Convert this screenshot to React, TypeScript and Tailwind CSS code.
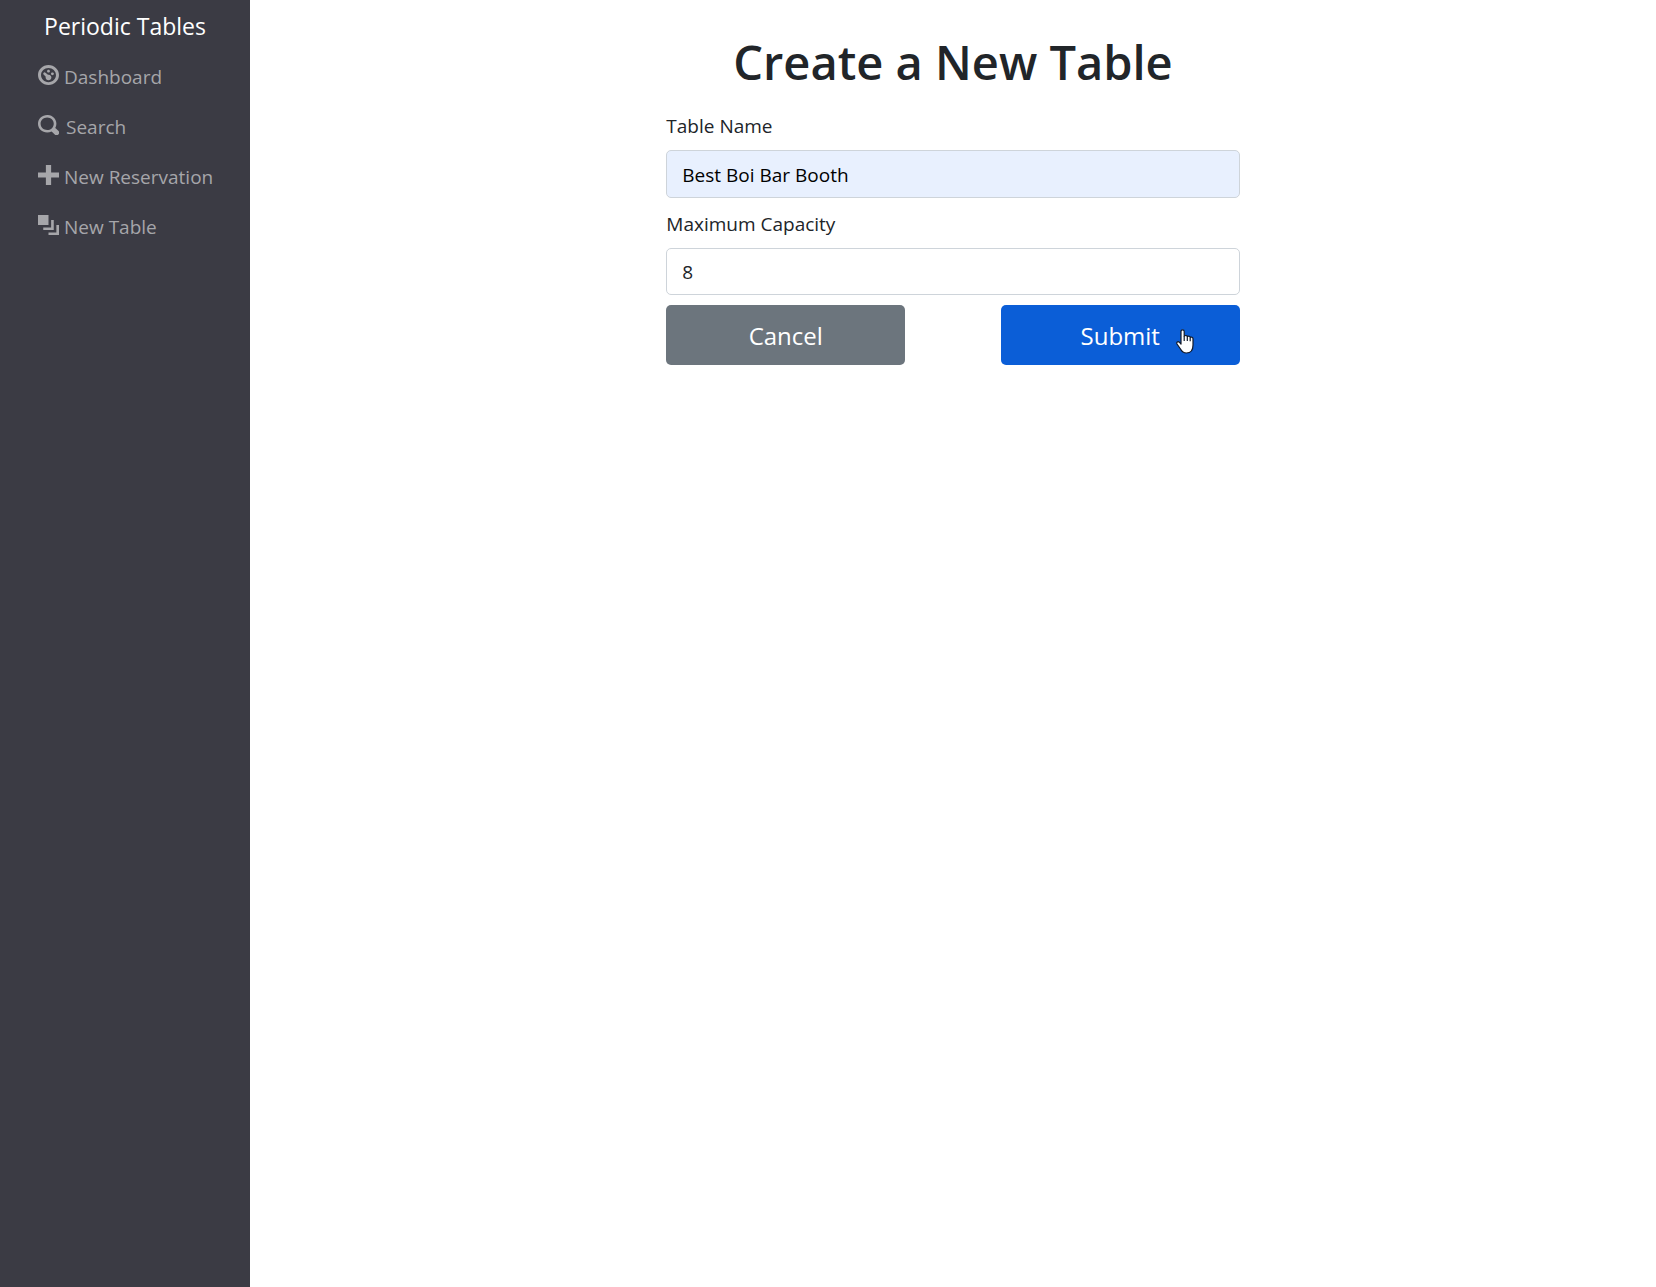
const navItems = [
  {
    label: "Dashboard",
    gap: "gap-[5px]",
    path: "M4 0c-2.2 0-4 1.8-4 4s1.8 4 4 4 4-1.8 4-4-1.8-4-4-4zm0 1.150c1.570 0 2.850 1.280 2.850 2.850s-1.280 2.850-2.850 2.850-2.850-1.280-2.850-2.850 1.280-2.850 2.850-2.850zm0 .75c-.3 0-.55.25-.55.55s.25.55.55.55.55-.25.55-.55-.25-.55-.55-.55zm-1.66 1.100a.5.5 0 0 0-.19.84l.8.86c-.02.08-.05.2-.05.3 0 .6.5 1.100 1.100 1.100s1.100-.5 1.100-1.100-.4-1.100-1-1.150c-.1 0-.2.04-.3.06l-.96-.81a.5.5 0 0 0-.44-.16.5.5 0 0 0-.06 0zm3.160 0c-.3 0-.55.22-.55.5s.25.55.55.55.55-.25.55-.55-.25-.5-.55-.5z",
  },
  {
    label: "Search",
    gap: "gap-[7px]",
    path: "M3.5 0c-1.93 0-3.5 1.57-3.5 3.5s1.57 3.5 3.5 3.5c.59 0 1.17-.14 1.66-.41a1 1 0 0 0 .13.13l1 1a1.02 1.02 0 1 0 1.44-1.44l-1-1a1 1 0 0 0-.16-.13c.27-.49.44-1.06.44-1.66 0-1.93-1.55-3.5-3.5-3.5zm0 1c1.39 0 2.5 1.11 2.5 2.5 0 .66-.24 1.27-.66 1.72l-.03.03a1 1 0 0 0-.13.13c-.44.4-1.04.63-1.69.63-1.39 0-2.5-1.11-2.5-2.5s1.11-2.5 2.5-2.5z",
  },
  {
    label: "New Reservation",
    gap: "gap-[5px]",
    path: "M3 0v3h-3v2h3v3h2v-3h3v-2h-3v-3h-2z",
  },
  {
    label: "New Table",
    gap: "gap-[5px]",
    path: "M0 0v4h4v-4h-4zm5 2v3h-3v1h4v-4h-1zm2 2v3h-3v1h4v-4h-1z",
  },
];

function Sidebar() {
  return (
    <nav className="w-[250px] shrink-0 bg-[#3b3b44]">
      <a href="#" className="flex h-[52px] items-center justify-center text-[23px] text-white">
        Periodic Tables
      </a>
      <ul className="pl-[38px]">
        {navItems.map((item) => (
          <li key={item.label}>
            <a href="#" className={`flex h-[50px] items-center text-[19px] text-[#a6a6aa] ${item.gap}`}>
              <svg
                viewBox="0 0 8 8"
                preserveAspectRatio="none"
                className="mb-1 h-5 w-[21px] fill-current"
                aria-hidden="true"
              >
                <path d={item.path} />
              </svg>
              {item.label}
            </a>
          </li>
        ))}
      </ul>
    </nav>
  );
}

function HandCursor() {
  return (
    <svg
      viewBox="0 0 18 25"
      className="pointer-events-none absolute top-6 right-[46px] h-[25px] w-[18px]"
      aria-hidden="true"
    >
      <path
        d="M5 15V2.500C5 .2 8.200.2 8.200 2.500V7C9.500 6.100 11.200 6.500 11.500 7.500C12.500 6.800 14 7.200 14.300 8.300C15.300 7.700 17 8.200 17 9.800V16C17 21 14.500 24 10.500 24C7 24 5.500 22 4.500 20L1 15C.2 13.200 1.800 12 3.300 13.200Z"
        fill="white"
        stroke="#111827"
        strokeWidth="1.2"
        strokeLinejoin="round"
      />
      <path d="M8.200 7v5M11.300 7.500v4.500M14.200 8.300v4" stroke="#111827" strokeWidth="1.200" fill="none" />
    </svg>
  );
}

export default function App() {
  return (
    <div className="flex min-h-screen bg-white font-['Open_Sans','Noto_Sans',sans-serif] text-[#212529]">
      <Sidebar />
      <main className="flex-1 px-[15px] pt-8">
        <form className="mx-auto w-5/12" onSubmit={(e) => e.preventDefault()}>
          <h1 className="text-center text-[47px] leading-[60px] font-semibold whitespace-nowrap">Create a New Table</h1>
          <label htmlFor="table-name" className="mt-[19px] block text-[19px] leading-[30px]">
            Table Name
          </label>
          <input
            id="table-name"
            type="text"
            defaultValue="Best Boi Bar Booth"
            className="mt-[9px] block h-12 w-full rounded-[5px] border border-[#ced4da] bg-[#e8f0fe] px-[15px] pt-0.5 text-[19px] text-black outline-none"
          />
          <label htmlFor="capacity" className="mt-[11px] block text-[19px] leading-[30px]">
            Maximum Capacity
          </label>
          <input
            id="capacity"
            type="text"
            inputMode="numeric"
            defaultValue="8"
            className="mt-[9px] block h-[47px] w-full rounded-[5px] border border-[#ced4da] bg-white px-[15px] text-[19px] outline-none"
          />
          <div className="mt-[10px] grid grid-cols-12 text-2xl text-white">
            <button type="button" className="col-span-5 h-[60px] rounded-[5px] bg-[#6c757d] pt-px">
              Cancel
            </button>
            <button type="submit" className="relative col-span-5 col-start-8 h-[60px] rounded-[5px] bg-[#0b5ed7] pt-px">
              Submit
              <HandCursor />
            </button>
          </div>
        </form>
      </main>
    </div>
  );
}
